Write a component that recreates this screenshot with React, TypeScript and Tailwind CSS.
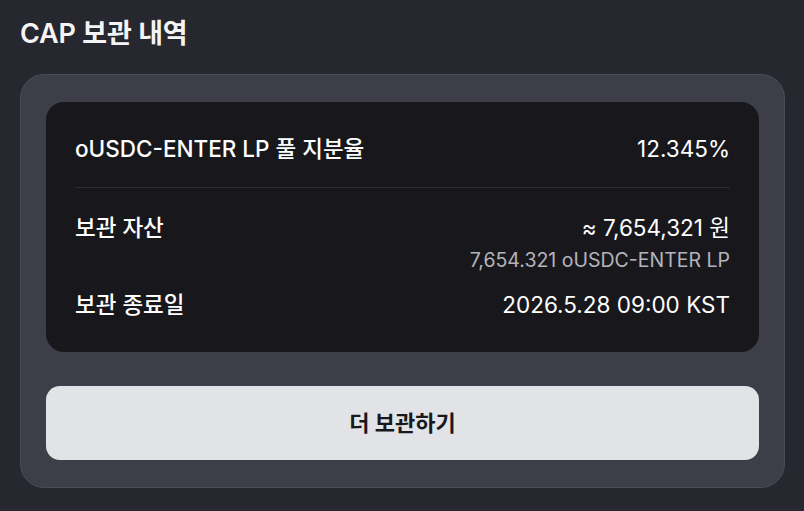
export default function App() {
  const font = { fontFamily: '"Inter", "Noto Sans CJK KR", sans-serif' };
  return (
    <div
      className="w-[804px] h-[511px] bg-[#27272f] pl-5 pr-[19px] pt-[17px] flex flex-col items-stretch text-white"
      style={font}
    >
      <h1 className="text-[27px] leading-[34px] font-semibold tracking-[-0.2px] text-[#f4f4f5]">
        CAP 보관 내역
      </h1>
      <div className="mt-[23px] rounded-[24px] border border-[#4b4b56] bg-[#3e3e48] px-[25px] pt-[27px] pb-[27px] flex flex-col gap-[34px]">
        <div className="rounded-[18px] bg-[#18181c] px-[29px] py-[33px] flex flex-col">
          <div className="flex justify-between items-center h-[28px] text-[22.5px]">
            <span className="font-medium">oUSDC-ENTER LP 풀 지분율</span>
            <span>12.345%</span>
          </div>
          <div className="mt-[24px] h-px bg-[#2c2c33]" />
          <div className="mt-[26px] flex justify-between items-start">
            <span className="text-[22.5px] leading-[28px] font-medium">보관 자산</span>
            <div className="flex flex-col items-end">
              <span className="text-[22.5px] leading-[28px]">≈ 7,654,321 원</span>
              <span className="mt-[5px] text-[19.5px] leading-[26px] text-[#b4b4bc]">
                7,654.321 oUSDC-ENTER LP
              </span>
            </div>
          </div>
          <div className="mt-[18px] flex justify-between items-center h-[28px] text-[22.5px]">
            <span className="font-medium">보관 종료일</span>
            <span>2026.5.28 09:00 KST</span>
          </div>
        </div>
        <button className="h-[74px] rounded-[14px] bg-[#e2e3e7] text-[#18181b] text-[22px] font-bold">
          더 보관하기
        </button>
      </div>
    </div>
  );
}
